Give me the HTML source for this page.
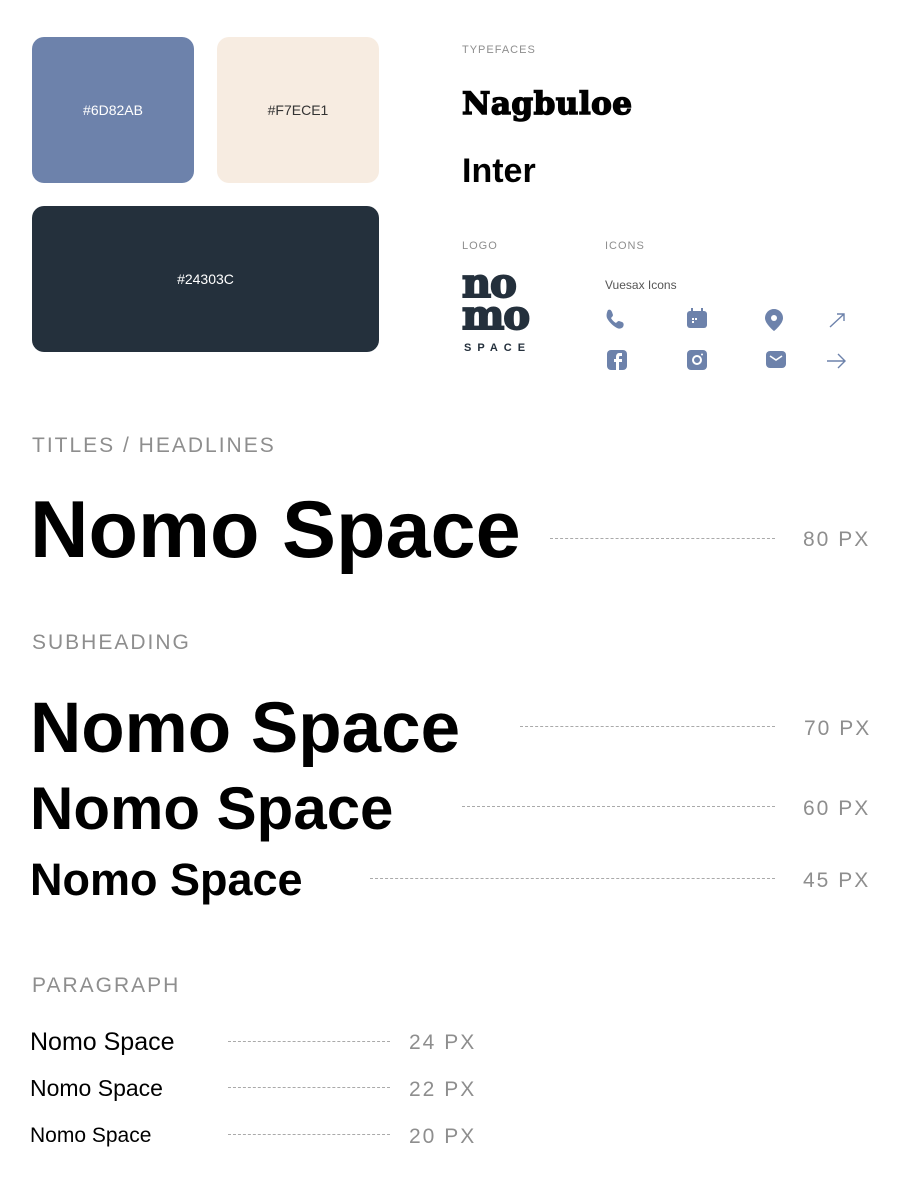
<!DOCTYPE html>
<html><head><meta charset="utf-8"><style>
body{margin:0;width:921px;height:1186px;background:#fff;position:relative;font-family:"Liberation Sans",sans-serif;overflow:hidden}
.a{position:absolute}
.sw{position:absolute;border-radius:12px;display:flex;align-items:center;justify-content:center;font-size:14px}
.lab{position:absolute;color:#8e8e8e;font-size:11px;letter-spacing:1px}
.h{position:absolute;color:#8e8e8e;font-size:21px;letter-spacing:2px}
.n{position:absolute;left:30px;font-weight:bold;color:#000;white-space:nowrap;line-height:1}
.p{position:absolute;left:30px;color:#000;white-space:nowrap;line-height:1}
.d{position:absolute;border-top:1.5px dashed #aaa;height:0}
.px{position:absolute;color:#8e8e8e;font-size:21px;letter-spacing:2px;line-height:1}
</style></head><body>
<div class="sw" style="left:32px;top:37px;width:162px;height:146px;background:#6D82AB;color:#fff">#6D82AB</div>
<div class="sw" style="left:217px;top:37px;width:162px;height:146px;background:#F7ECE1;color:#333">#F7ECE1</div>
<div class="sw" style="left:32px;top:206px;width:347px;height:146px;background:#24303C;color:#fff">#24303C</div>

<div class="lab" style="left:462px;top:44px">TYPEFACES</div>
<div class="a" style="left:462px;top:86px;font-family:'DejaVu Serif',serif;font-weight:bold;font-size:31px;-webkit-text-stroke:1.5px #000;letter-spacing:0.5px">Nagbuloe</div>
<div class="a" style="left:462px;top:152px;font-weight:bold;font-size:34px">Inter</div>

<div class="lab" style="left:462px;top:240px">LOGO</div>
<div class="a" style="left:462px;top:268px;font-family:'DejaVu Serif',serif;font-weight:bold;font-size:40px;line-height:32px;color:#24303C;letter-spacing:-1px;-webkit-text-stroke:2px #24303C">no<br>mo</div>
<div class="a" style="left:464px;top:342px;font-weight:bold;font-size:11px;letter-spacing:6px;color:#24303C">SPACE</div>

<div class="lab" style="left:605px;top:240px">ICONS</div>
<div class="a" style="left:605px;top:278px;font-size:12px;color:#555">Vuesax Icons</div>
<svg class="a" style="left:600px;top:305px" width="260" height="70" viewBox="0 0 260 70" fill="#6D82AB">
<path d="M8 5c2-1 3 0 4 2l1 3c0 1-1 2-2 3 1 2 3 4 5 5 1-1 2-2 3-2l3 1c2 1 2 3 1 5-2 2-4 2-6 1-4-2-8-6-10-10-1-3 0-6 1-8z"/>
<rect x="87" y="6" width="20" height="17" rx="3"/><rect x="91" y="3" width="2" height="5"/><rect x="101" y="3" width="2" height="5"/>
<rect x="92" y="13" width="2" height="2" fill="#fff"/><rect x="95" y="13" width="2" height="2" fill="#fff"/><rect x="92" y="16" width="2" height="2" fill="#fff"/>
<path d="M174 4c5 0 9 4 9 9 0 6-9 13-9 13s-9-7-9-13c0-5 4-9 9-9z"/><circle cx="174" cy="13" r="3" fill="#fff"/>
<path d="M230 22l14-13M237 9h7v7" stroke="#6D82AB" stroke-width="1.4" fill="none"/>
<rect x="7" y="45" width="20" height="20" rx="4"/><path d="M19 65v-8h3v-3h-3v-2c0-1 1-1 2-1h1v-3h-3c-2 0-3 2-3 4v2h-2v3h2v8z" fill="#fff"/>
<rect x="87" y="45" width="20" height="20" rx="4"/><circle cx="97" cy="55" r="4" fill="none" stroke="#fff" stroke-width="2"/><circle cx="102" cy="49.5" r="1" fill="#fff"/>
<rect x="166" y="46" width="20" height="17" rx="4"/><path d="M170 51l6 4 6-4" stroke="#fff" stroke-width="1.6" fill="none"/>
<path d="M227 56h18M238 49l7 7-7 7" stroke="#6D82AB" stroke-width="1.4" fill="none"/>
</svg>

<div class="h" style="left:32px;top:434px">TITLES / HEADLINES</div>
<div class="n" style="top:490px;font-size:81px">Nomo Space</div>
<div class="d" style="left:550px;top:538px;width:225px"></div>
<div class="px" style="left:803px;top:529px">80 PX</div>

<div class="h" style="left:32px;top:631px">SUBHEADING</div>
<div class="n" style="top:693px;font-size:71px">Nomo Space</div>
<div class="d" style="left:520px;top:726px;width:255px"></div>
<div class="px" style="left:804px;top:718px">70 PX</div>
<div class="n" style="top:779px;font-size:60px">Nomo Space</div>
<div class="d" style="left:462px;top:806px;width:313px"></div>
<div class="px" style="left:803px;top:798px">60 PX</div>
<div class="n" style="top:857px;font-size:45px">Nomo Space</div>
<div class="d" style="left:370px;top:878px;width:405px"></div>
<div class="px" style="left:803px;top:870px">45 PX</div>

<div class="h" style="left:32px;top:974px">PARAGRAPH</div>
<div class="p" style="top:1030px;font-size:25px">Nomo Space</div>
<div class="d" style="left:228px;top:1041px;width:162px"></div>
<div class="px" style="left:409px;top:1032px">24 PX</div>
<div class="p" style="top:1077px;font-size:23px">Nomo Space</div>
<div class="d" style="left:228px;top:1087px;width:162px"></div>
<div class="px" style="left:409px;top:1079px">22 PX</div>
<div class="p" style="top:1125px;font-size:21px">Nomo Space</div>
<div class="d" style="left:228px;top:1134px;width:162px"></div>
<div class="px" style="left:409px;top:1126px">20 PX</div>
</body></html>
